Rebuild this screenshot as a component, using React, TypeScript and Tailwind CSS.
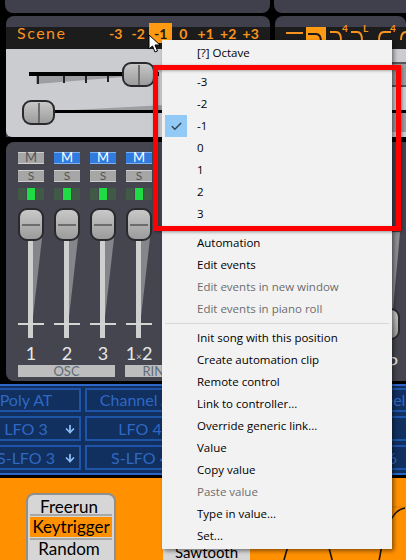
import React from "react";
import { Check, ArrowDown } from "lucide-react";

const Cap: React.FC<{ vertical?: boolean; className?: string }> = ({ vertical, className }) => (
  <div
    className={`absolute rounded-[9px] border-2 border-[#2a2a2e] bg-linear-to-b from-[#c8c8c8] to-[#9c9c9c] flex items-center justify-center ${className ?? ""}`}
  >
    {vertical ? <div className="w-[2px] h-[20px] bg-[#6c6c6c]" /> : <div className="h-[2px] w-[18px] bg-[#6c6c6c]" />}
  </div>
);

const Strip: React.FC<{ label: React.ReactNode; mute?: boolean }> = ({ label, mute }) => (
  <div className="w-[36px] shrink-0 flex flex-col items-center">
    <div
      className={`w-[26px] h-[12px] flex items-center justify-center text-[13px] border-y ${
        mute ? "bg-[#2f7be0] border-[#7fb0ef] text-white" : "bg-[#a6a6a6] border-[#cfcfcf] text-[#555]"
      }`}
    >
      M
    </div>
    <div className="w-[26px] h-[12px] mt-[6px] flex items-center justify-center text-[12px] border-y bg-[#a6a6a6] border-[#cfcfcf] text-[#555]">
      S
    </div>
    <div className="flex w-[26px] h-[12px] mt-[6px] gap-[1px]">
      <div className="flex-1 bg-[#405a47]" />
      <div className="flex-1 bg-[#20dc44]" />
      <div className="flex-1 bg-[#405a47]" />
    </div>
    <div className="relative w-[36px] h-[134px] mt-[8px]">
      <svg className="absolute left-[18px] top-[30px]" width="12" height="90">
        <polygon points="0,0 11,0 1,88 0,88" fill="#85868b" />
      </svg>
      <div className="absolute left-[15px] top-[30px] w-[5px] h-[100px] bg-[#cfcfcf]" />
      <div className="absolute left-[5px] top-[115px] w-[26px] h-[2px] bg-[#d4d4d4]" />
      <Cap className="left-[5px] top-0 w-[26px] h-[33px]" />
    </div>
    <div className="mt-[1px] h-[20px] text-[18px] leading-[20px] text-[#e8e8e8] whitespace-nowrap">{label}</div>
  </div>
);

const FilterCurve: React.FC<{ rising?: boolean; sup?: string; className: string }> = ({ rising, sup, className }) => (
  <div className={`relative shrink-0 mt-[-1px] ${className}`}>
    <svg width="14" height="16">
      {rising ? (
        <path d="M1 14 Q1 6 6 6 H13" fill="none" stroke="#f7931e" strokeWidth="2" />
      ) : (
        <path d="M0 6 H6 Q11 6 11 14" fill="none" stroke="#f7931e" strokeWidth="2" />
      )}
    </svg>
    {sup && <span className="absolute left-[12px] -top-[3px] text-[10px] leading-[10px] font-bold text-[#f7931e]">{sup}</span>}
  </div>
);

const ModCell: React.FC<{ text?: string; arrow?: boolean }> = ({ text, arrow }) => (
  <div className="relative w-[110px] shrink-0 mr-[4px] border-2 border-[#1f55a8] flex items-center justify-center text-[#2f68c4] text-[16px]">
    {text}
    {arrow && <ArrowDown className="absolute right-[3px] top-[5px] text-[#8cc0f8]" size={12} strokeWidth={3.5} />}
  </div>
);

const MenuItem: React.FC<{ text: string; disabled?: boolean; checked?: boolean }> = ({ text, disabled, checked }) => (
  <div className={`h-[22px] flex items-center ${disabled ? "text-[#6d6d6d]" : "text-black"}`}>
    <div className={`ml-[3px] w-[22px] h-[22px] flex items-center justify-center ${checked ? "bg-[#91c9f7]" : ""}`}>
      {checked && <Check size={13} strokeWidth={2.5} className="text-[#33404d]" />}
    </div>
    <span className="ml-[10px] whitespace-nowrap">{text}</span>
  </div>
);

const MenuSep = () => (
  <div className="h-[7px] flex items-center pl-[3px] pr-[3px]">
    <div className="h-[1px] w-full bg-[#d7d7d7]" />
  </div>
);

export default function App() {
  const steps = ["-3", "-2", "-1", "0", "+1", "+2", "+3"];
  return (
    <div className="relative w-[406px] h-[560px] overflow-hidden bg-black font-['Lato',sans-serif] flex flex-col">
      {/* top panels */}
      <div className="flex h-[13px] shrink-0">
        <div className="ml-[5px] w-[265px] rounded-b-lg bg-[#3f404b] overflow-hidden">
          <div className="-mt-[15px] ml-[147px] text-[15px] leading-[18px] font-bold text-white whitespace-nowrap">Noise Color</div>
        </div>
        <div className="ml-[4px] flex-1 rounded-bl-lg bg-[#3f404b]" />
      </div>

      {/* scene + filter */}
      <div className="flex h-[121px] mt-[3px] shrink-0">
        <div className="ml-[6px] w-[264px] rounded-t-lg bg-[#3f404b] flex flex-col">
          <div className="mt-[11px] h-[22px] bg-[#1c1c1c] flex items-start">
            <span className="ml-[11px] -mt-[4px] text-[16px] leading-[20px] tracking-[1.5px] text-[#f7931e]">Scene</span>
            <div className="ml-[38px] -mt-[4px] flex font-bold text-[14px] text-[#f7931e]">
              {steps.map((s) => (
                <div
                  key={s}
                  className={`w-[22.5px] h-[20px] flex items-center justify-center ${s === "-1" ? "bg-[#ff9a12] text-[#1c1c1c]" : ""}`}
                >
                  {s}
                </div>
              ))}
            </div>
          </div>
          <div className="flex-1 bg-[#cbccd0] rounded-b-md relative">
            {/* scene faders */}
            <div className="absolute left-[23px] top-[23px] w-[130px] h-[4px] bg-black" />
            <svg className="absolute left-[30px] top-[27px]" width="104" height="10">
              <polygon points="0,8 100,0 0,0" fill="#9d9ea2" />
              <path d="M2 0V8 M28 0V7 M50 0V7 M72 0V6 M93 0V4" stroke="#222" strokeWidth="2" />
            </svg>
            <Cap vertical className="left-[116px] top-[13px] w-[33px] h-[25px]" />
            <svg className="absolute left-[49px] top-[56px]" width="110" height="8">
              <polygon points="0,6 110,0 110,6" fill="#9d9ea2" />
            </svg>
            <div className="absolute left-[49px] top-[61px] w-[110px] h-[3px] bg-black" />
            <Cap vertical className="left-[16px] top-[51px] w-[33px] h-[25px]" />
          </div>
        </div>
        <div className="ml-[5px] flex-1 rounded-t-lg bg-[#3f404b] flex flex-col overflow-hidden">
          <div className="mt-[11px] h-[22px] bg-[#1c1c1c] flex items-start shrink-0 overflow-visible">
            <div className="ml-[11px] w-[17px] h-[2px] mt-[5px] bg-[#f7931e] shrink-0" />
            <div className="ml-[3px] w-[20px] h-[22px] bg-[#ff9a12] pl-[2px] pt-[5px] shrink-0">
              <svg width="16" height="14">
                <path d="M0 2 H8 Q13 2 13 10" fill="none" stroke="#1c1c1c" strokeWidth="2" />
              </svg>
            </div>
            <div className="ml-[4px] flex h-full">
              <FilterCurve sup="4" className="w-[21px]" />
              <FilterCurve sup="L" className="w-[27px]" />
              <FilterCurve rising sup="4" className="w-[22px]" />
              <FilterCurve rising className="w-[14px]" />
            </div>
          </div>
          <div className="flex-1 bg-[#cbccd0] flex flex-col">
            <div className="mt-[13px] h-[25px] bg-[#9c9c9c] border-y-2 border-[#55565a]" />
            <div className="mt-[23px] h-[22px] bg-[#9c9c9c] border-t-[3px] border-black" />
          </div>
        </div>
      </div>

      {/* mixer */}
      <div className="ml-[6px] mt-[5px] h-[239px] shrink-0 rounded-l-lg bg-[#44454f] flex pl-[7px] pt-[10px] relative">
        <Strip label="1" />
        <Strip label="2" mute />
        <Strip label="3" mute />
        <Strip label={<span>1<span className="text-[10px] text-[#ccc]">×</span>2</span>} mute />
        <Strip label={<span>2<span className="text-[10px] text-[#ccc]">×</span>3</span>} mute />
        {/* last channel, fader pulled down */}
        <div className="ml-[181px] w-[26px] relative shrink-0">
          <svg className="absolute left-[18px] top-[80px]" width="10" height="80">
            <polygon points="0,0 8,0 1,78 0,78" fill="#8e8f94" />
          </svg>
          <div className="absolute left-0 top-[156px] w-[26px] h-[32px] rounded-[9px] border-2 border-[#2a2a2e] bg-linear-to-b from-[#c8c8c8] to-[#9c9c9c]" />
          <div className="absolute left-[13px] top-[201px] text-[18px] leading-[20px] text-[#e8e8e8]">P</div>
        </div>
        {/* channel group labels */}
        <div className="absolute left-[12px] top-[223px] w-[97px] h-[12px] bg-[#bdbdbd] text-[#5f6b78] text-[13px] leading-[12px] text-center">OSC</div>
        <div className="absolute left-[119px] top-[223px] w-[66px] h-[12px] bg-[#bdbdbd] text-[#5f6b78] text-[13px] leading-[12px] text-center">RING</div>
      </div>

      {/* modulation sources */}
      <div className="mt-[3px] h-[91px] shrink-0 bg-[#11305f] border-t-2 border-b-2 border-[#2c66c8] flex flex-col gap-[4px] pt-[2px] overflow-hidden">
        <div className="flex -ml-[29px] h-[24px] shrink-0">
          <ModCell text="Poly AT" />
          <ModCell text="Channel AT" />
          <ModCell />
          <ModCell text="Modwheel" />
        </div>
        <div className="flex -ml-[29px] h-[25px] shrink-0">
          <ModCell text="LFO 3" arrow />
          <ModCell text="LFO 4" arrow />
          <ModCell />
          <ModCell text="LFO 6" arrow />
        </div>
        <div className="flex -ml-[29px] h-[25px] shrink-0">
          <ModCell text="S-LFO 3" arrow />
          <ModCell text="S-LFO 4" arrow />
          <ModCell />
          <ModCell text="S-LFO 6" arrow />
        </div>
      </div>

      {/* lfo section */}
      <div className="mt-[3px] flex-1 bg-[#ff9000] flex relative overflow-hidden">
        <div className="ml-[26px] mt-[15px] w-[90px] h-[80px] rounded-lg bg-[#d6d6d6] border-2 border-[#8f8f8f] flex flex-col items-center px-[2px] text-[17px] text-black shrink-0">
          <div className="h-[18px] leading-[24px] mr-[4px]">Freerun</div>
          <div className="w-full h-[2px] bg-[#a8a8a8] mt-[1px] shrink-0" />
          <div className="w-full h-[20px] mt-[1px] bg-[#ff9000] leading-[20px] text-center whitespace-nowrap shrink-0">Keytrigger</div>
          <div className="w-full h-[2px] bg-[#a8a8a8] mt-[1px] shrink-0" />
          <div className="h-[18px] leading-[18px] mr-[4px]">Random</div>
        </div>
        <div className="ml-[47px] mt-[62px] w-[87px] h-[30px] bg-[#d6d6d6] text-[15px] leading-[24px] text-black text-center shrink-0">Sawtooth</div>
        <svg className="absolute left-[260px] top-0" width="146" height="82">
          <path d="M0 29 H146" stroke="#e08000" strokeWidth="1" />
          <path d="M22 90 Q28 65 32 60 M66 60 Q70 72 74 90 M118 90 Q126 32 145 30" fill="none" stroke="#111" strokeWidth="1.6" />
        </svg>
      </div>

      {/* context menu */}
      <div className="absolute left-[162px] top-[40px] w-[230px] bg-[#f2f2f2] pt-[2px] pb-[2px] shadow-[2px_2px_4px_rgba(0,0,0,0.45)] font-['Open_Sans',sans-serif] text-[11.5px]">
        <MenuItem text="[?] Octave" />
        <MenuSep />
        <MenuItem text="-3" />
        <MenuItem text="-2" />
        <MenuItem text="-1" checked />
        <MenuItem text="0" />
        <MenuItem text="1" />
        <MenuItem text="2" />
        <MenuItem text="3" />
        <MenuSep />
        <MenuItem text="Automation" />
        <MenuItem text="Edit events" />
        <MenuItem text="Edit events in new window" disabled />
        <MenuItem text="Edit events in piano roll" disabled />
        <MenuSep />
        <MenuItem text="Init song with this position" />
        <MenuItem text="Create automation clip" />
        <MenuItem text="Remote control" />
        <MenuItem text="Link to controller..." />
        <MenuItem text="Override generic link..." />
        <MenuItem text="Value" />
        <MenuItem text="Copy value" />
        <MenuItem text="Paste value" disabled />
        <MenuItem text="Type in value..." />
        <MenuItem text="Set..." />
      </div>

      {/* red annotation box */}
      <div className="absolute left-[153px] top-[65px] w-[248px] h-[166px] border-[5px] border-[#ff0000] shadow-[1px_1px_3px_rgba(0,0,0,0.4),inset_1px_1px_3px_rgba(0,0,0,0.3)]" />

      {/* mouse cursor */}
      <svg className="absolute left-[148px] top-[34px]" width="14" height="20" viewBox="0 0 14 20">
        <path d="M1 1 V15 L4.5 12 L7 18 L9.5 17 L7 11 H12 Z" fill="#fff" stroke="#000" strokeWidth="1" />
      </svg>
    </div>
  );
}
